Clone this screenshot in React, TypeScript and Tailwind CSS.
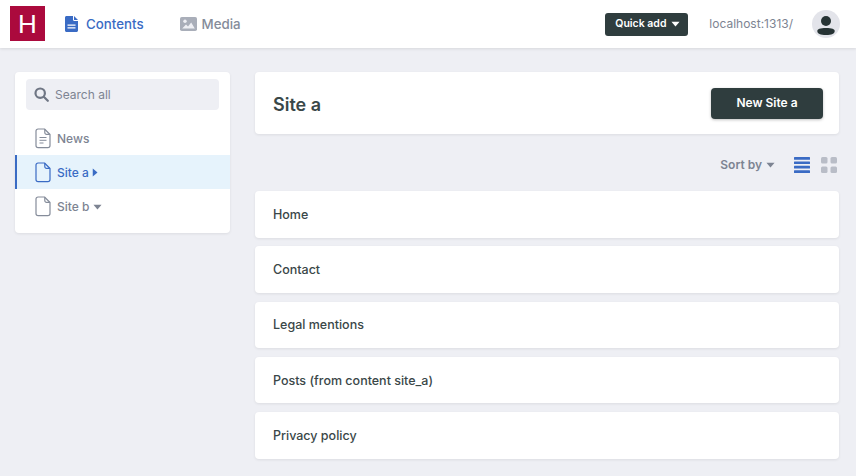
import React from "react";

const Caret = ({ className = "" }: { className?: string }) => (
  <svg viewBox="0 0 10 6" className={className} fill="currentColor"><path d="M0.5 0.5h9L5 5.8z" /></svg>
);

const FileIcon = ({ lines = false, color }: { lines?: boolean; color: string }) => (
  <svg width="16" height="21" viewBox="0 0 16 21" fill="none" stroke={color} strokeWidth="1.2" strokeLinejoin="round">
    <path d="M3 1h6.5L15 6.5V17.5A2.2 2.2 0 0 1 12.8 19.7H3.2A2.2 2.2 0 0 1 1 17.5V3A2 2 0 0 1 3 1Z" />
    <path d="M9.8 1.2v3.4a1.8 1.8 0 0 0 1.8 1.8h3.2" />
    {lines && <path d="M4.5 9.5h7M4.5 12.3h7M4.5 15h4" strokeWidth="1" />}
  </svg>
);

const rows = ["Home", "Contact", "Legal mentions", "Posts (from content site_a)", "Privacy policy"];

export default function App() {
  return (
    <div className="w-[856px] h-[476px] overflow-hidden bg-[#eeeff4] text-[#3a4748] font-['Inter','Liberation_Sans',sans-serif]">
      <header className="h-12 bg-white shadow-[0_1px_3px_rgba(0,0,0,0.1)] relative flex items-center pl-2.5 pr-[16px]">
        <div className="w-[35px] h-[35px] bg-[#ab0a3d] flex items-center justify-center text-white text-[26px] leading-none font-['Liberation_Sans',sans-serif] -mt-[1px]">H</div>
        <nav className="flex items-center ml-5 text-[13.3px] font-medium">
          <div className="flex items-center gap-2 text-[#3a6bc4]">
            <svg width="13" height="16" viewBox="0 0 13 16" fill="currentColor">
              <path d="M1.5 0H8v3.8c0 .7.5 1.2 1.2 1.2H13v9.500c0 .8-.7 1.500-1.500 1.500h-10C.7 16 0 15.300 0 14.500V1.500C0 .7.7 0 1.500 0Z" />
              <path d="M9 0l4 4H9.500A.5.5 0 0 1 9 3.500Z" />
              <path d="M2.500 8.500h8v1.200h-8zM2.500 11.300h8v1.200h-8z" fill="#fff" />
            </svg>
            <span className="pt-[1px]">Contents</span>
          </div>
          <div className="flex items-center gap-[5px] text-[#858c9a] ml-[36px]">
            <svg width="17" height="14" viewBox="0 0 17 14">
              <rect width="17" height="14" rx="1.800" fill="#a9aeb9" />
              <circle cx="5" cy="4.300" r="1.700" fill="#eeeff4" />
              <path d="M2.200 11.500 6 7.500l2 2 3.200-4 3.600 6z" fill="#eeeff4" />
            </svg>
            <span className="pt-[1px]">Media</span>
          </div>
        </nav>
        <div className="ml-auto flex items-center">
          <button className="h-[23px] w-[83px] rounded-[3px] bg-[#2f3d3e] text-white text-[10.5px] font-semibold flex items-center justify-center gap-[5px] pl-[2px]">
            Quick add <Caret className="w-[9px] h-[6px]" />
          </button>
          <span className="ml-[21px] text-[12px] text-[#7d8492]">localhost:1313/</span>
          <div className="ml-[19px] w-[28px] h-[28px] rounded-full bg-[#e3e4ea] flex items-center justify-center">
            <svg width="18" height="21" viewBox="0 0 18 21" fill="#263334">
              <circle cx="9" cy="7" r="5" />
              <path d="M0.300 17c0-2 2.700-3 8.700-3s8.700 1 8.700 3c0 2.700-3 4-8.700 4S.300 19.700.300 17Z" />
            </svg>
          </div>
        </div>
      </header>

      <div className="flex items-start gap-[25px] pl-[15px] pt-6">
        <aside className="w-[215px] h-[161px] shrink-0 rounded-[4px] bg-white shadow-[0_1px_3px_rgba(0,0,0,0.08)] pt-[7px]">
          <div className="mx-[11px] h-[31px] rounded-[4px] bg-[#eeeff4] flex items-center gap-[6px] pl-2 text-[12px] text-[#7d8492]">
            <svg width="15" height="15" viewBox="0 0 15 15" fill="none" stroke="#6f7684" strokeWidth="2.200" strokeLinecap="round">
              <circle cx="6.200" cy="6.200" r="4.700" />
              <path d="m10 10 3.800 3.800" />
            </svg>
            Search all
          </div>
          <ul className="mt-[11px] text-[12px] font-medium">
            <li className="h-[34px] flex items-center gap-[6px] pl-[20px] text-[#7d8492]">
              <FileIcon lines color="#858c9a" /> <span className="pt-[1px]">News</span>
            </li>
            <li className="h-[34px] flex items-center gap-[6px] pl-[18px] bg-[#e6f3fc] text-[#3a6bc4] border-l-2 border-[#3a6bc4]">
              <FileIcon color="#3a6bc4" /> <span className="pt-[1px]">Site a</span>
              <svg viewBox="0 0 6 10" className="w-[6px] h-[9px] -ml-[3px] mt-[1px]" fill="currentColor"><path d="M.5.500v9L5.800 5z" /></svg>
            </li>
            <li className="h-[34px] flex items-center gap-[6px] pl-[20px] text-[#7d8492]">
              <FileIcon color="#858c9a" /> <span className="pt-[1px]">Site b</span>
              <Caret className="w-[9px] h-[6px] -ml-[2px] mt-[1px]" />
            </li>
          </ul>
        </aside>

        <main className="w-[584px] shrink-0">
          <section className="h-[62px] rounded-[4px] bg-white shadow-[0_1px_3px_rgba(0,0,0,0.08)] flex items-center justify-between pl-[18px] pr-[16px]">
            <h1 className="text-[18px] font-semibold pt-[2px]">Site a</h1>
            <button className="w-[112px] h-[31px] rounded-[4px] bg-[#2f3d3e] text-white text-[12px] font-semibold shadow-[0_1px_3px_rgba(0,0,0,0.25)]">New Site a</button>
          </section>
          <div className="h-[57px] flex items-center justify-end pr-[2px] pt-[4px] text-[#7d8492]">
            <span className="text-[12px] font-semibold">Sort by</span>
            <Caret className="w-[9px] h-[6px] ml-[4px]" />
            <svg width="16" height="16" viewBox="0 0 16 16" fill="#3a6bc4" className="ml-[19px]">
              <rect y="0" width="16" height="2.700" rx=".5" />
              <rect y="4.400" width="16" height="2.700" rx=".5" />
              <rect y="8.800" width="16" height="2.700" rx=".5" />
              <rect y="13.200" width="16" height="2.700" rx=".5" />
            </svg>
            <svg width="16" height="16" viewBox="0 0 16 16" fill="#b9bdc7" className="ml-[11px]">
              <rect width="6.500" height="6.500" rx="1.500" />
              <rect x="9.500" width="6.500" height="6.500" rx="1.500" />
              <rect y="9.500" width="6.500" height="6.500" rx="1.500" />
              <rect x="9.500" y="9.500" width="6.500" height="6.500" rx="1.500" />
            </svg>
          </div>
          <ul className="flex flex-col gap-[8.750px]">
            {rows.map((r) => (
              <li key={r} className="h-[46.500px] rounded-[4px] bg-white shadow-[0_1px_3px_rgba(0,0,0,0.08)] flex items-center pl-[18px] pt-[2px] text-[12.500px] font-medium">
                {r}
              </li>
            ))}
          </ul>
        </main>
      </div>
    </div>
  );
}
